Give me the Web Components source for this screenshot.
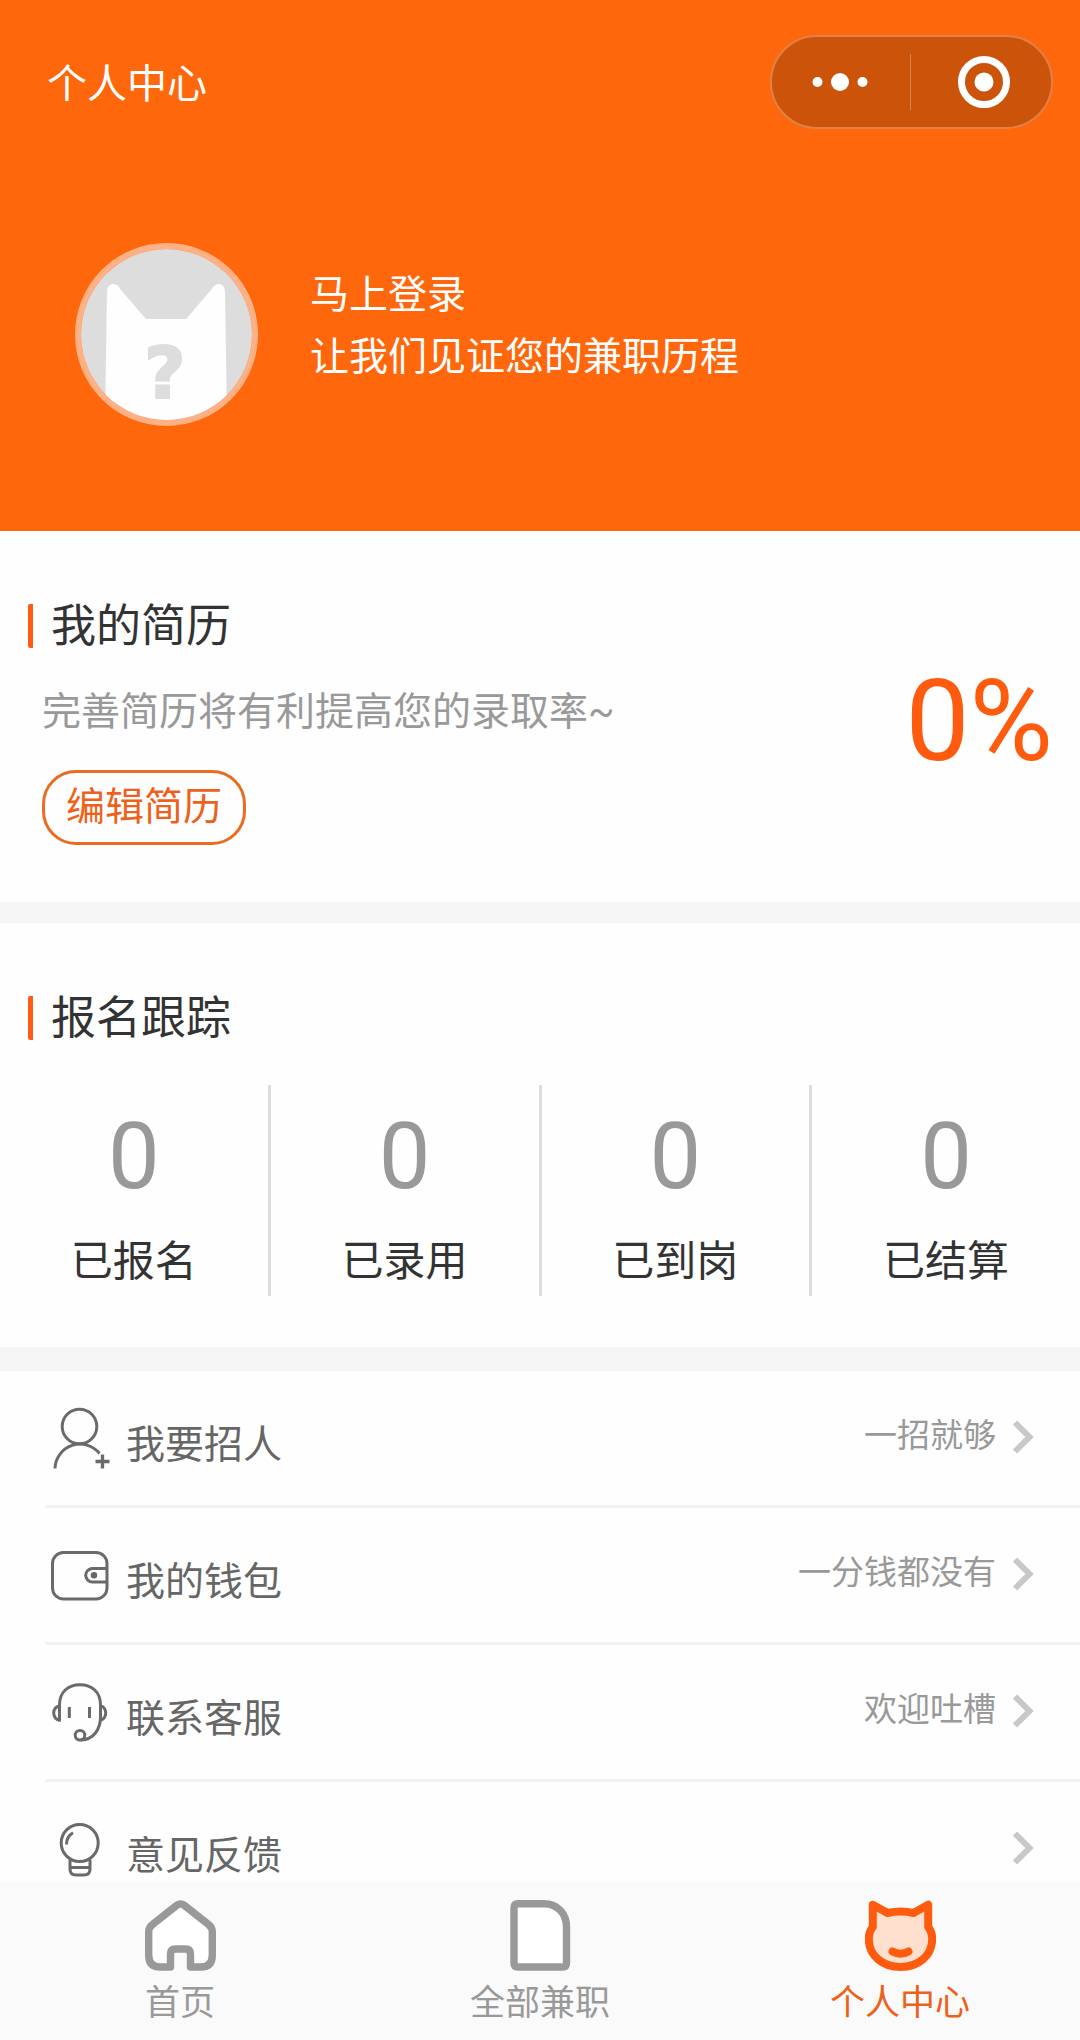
<!DOCTYPE html>
<html lang="zh-CN">
<head>
<meta charset="utf-8">
<meta name="viewport" content="width=device-width, initial-scale=1">
<title>个人中心</title>
<style>
  html, body { margin: 0; height: 100%; }
  body {
    font-family: Roboto, "Noto Sans CJK SC", sans-serif;
    color: #333;
    background: #fefefe;
    --brand: #ff670c;
    --brand-text: #ee611b;
    --band: #f5f5f5;
    --muted: #999;
  }
</style>
</head>
<body>
<app-shell>
  <profile-header heading="个人中心">
    <span slot="name">马上登录</span>
    <span slot="tagline">让我们见证您的兼职历程</span>
  </profile-header>
  <resume-card heading="我的简历" percent="0%">
    <span slot="tip">完善简历将有利提高您的录取率~</span>
    <span slot="action">编辑简历</span>
  </resume-card>
  <track-card heading="报名跟踪">
    <stat-cell value="0">已报名</stat-cell>
    <stat-cell value="0">已录用</stat-cell>
    <stat-cell value="0">已到岗</stat-cell>
    <stat-cell value="0">已结算</stat-cell>
  </track-card>
  <menu-list>
    <menu-row icon="recruit" hint="一招就够">我要招人</menu-row>
    <menu-row icon="wallet" hint="一分钱都没有">我的钱包</menu-row>
    <menu-row icon="service" hint="欢迎吐槽">联系客服</menu-row>
    <menu-row icon="feedback">意见反馈</menu-row>
  </menu-list>
  <tab-bar slot="tabs">
    <tab-item icon="home">首页</tab-item>
    <tab-item icon="jobs">全部兼职</tab-item>
    <tab-item icon="me" active>个人中心</tab-item>
  </tab-bar>
</app-shell>

<script>
const rowIcons = {
  recruit: '<circle cx="31.500" cy="20.500" r="17.300"/><path d="M7 62.500A25 25 0 0 1 51.500 47.500"/><path d="M54.500 48.500v14M47.500 55.500h14" stroke-width="3.300"/>',
  wallet: '<rect x="4.500" y="9.500" width="54.500" height="46.500" rx="11"/><path d="M58.500 25.500H44.500a6.800 6.800 0 0 0 0 13.600H58.500"/><circle cx="46" cy="32.300" r="3.200" fill="#666" stroke="none"/>',
  service: '<path d="M11.500 41.500V25C11.500 12 20 4.800 32 4.800S52.500 12 52.500 25V37C52.500 50 45 59.500 33 60"/><path d="M11.500 26a5.800 7 0 0 0 0 14M52.500 26a5.200 7 0 0 1 0 14M21.300 27v11M41.500 27v11"/><circle cx="32" cy="55.300" r="4.800"/>',
  feedback: '<circle cx="31.700" cy="26" r="18.500"/><path d="M18.500 27.500Q18.500 19.500 25 15.800M22 43V52q0 6 6 6h8q6 0 6-6V43M22 50.500h20"/>'
};
const tabIcons = {
  home: '<path fill="#fff" d="M31.500 5.500Q35.500 2.500 39.500 5.500L63.500 24.500Q67.300 27.500 67.300 32V55Q67.300 67 56 67H45.500V54Q45.500 49 40.500 49H30.500Q25.500 49 25.500 54V67H15Q3.700 67 3.700 55V32Q3.700 27.500 7.500 24.500Z"/>',
  jobs: '<path fill="#fff" d="M13 3.700H39C53 3.700 61.500 14 61.500 27V63Q61.500 67 57.500 67H13Q9 67 9 63V7.700Q9 3.700 13 3.700Z"/>',
  me: '<path fill="#ffdfcd" d="M7.800 4.800L22.500 13Q35.500 9.800 48.500 13L63.200 4.800V27Q67.200 32 67.200 39C67.200 56 53 67 35.500 67S3.800 56 3.800 39Q3.800 32 7.800 27Z"/><path d="M27.500 51.500q8 4.500 16 0"/>'
};

/* Base class: renders view() into an open shadow root. */
class View extends HTMLElement {
  connectedCallback() {
    if (this.shadowRoot) return;
    const t = document.createElement('template');
    t.innerHTML = this.view();
    this.attachShadow({ mode: 'open' }).append(t.content.cloneNode(true));
  }
  attr(name) { return this.getAttribute(name) || ''; }
}

class AppShell extends View {
  view() { return `
    <style>
      :host { display: flex; flex-direction: column; height: 100vh; }
      main { flex: 1; min-height: 0; overflow-y: auto; scrollbar-width: none; }
    </style>
    <main><slot></slot></main>
    <slot name="tabs"></slot>`; }
}

class ProfileHeader extends View {
  view() { return `
    <style>
      :host { display: block; background: var(--brand); color: #fff; padding: 35px 27px 105px 47px; }
      .top { display: flex; justify-content: space-between; align-items: center; }
      h1 { margin: 0; padding-top: 6px; font-size: 40px; line-height: 56px; font-weight: 400; }
      .profile { display: flex; align-items: center; gap: 52px; margin: 114px 0 0 28px; }
      .avatar { box-sizing: border-box; width: 183px; height: 183px; flex: none; border: 6px solid #ffb185; border-radius: 50%; overflow: hidden; }
      .avatar svg { display: block; }
      a { display: flex; flex-direction: column; padding-bottom: 18px; color: inherit; text-decoration: none; font-size: 39px; line-height: 62px; }
    </style>
    <div class="top"><h1>${this.attr('heading')}</h1><capsule-menu></capsule-menu></div>
    <div class="profile">
      <div class="avatar">
        <svg width="171" height="171" viewBox="0 0 171 171" role="img" aria-label="头像">
          <rect width="171" height="171" fill="#ddd"/>
          <path fill="#fefefe" d="M24 171L26 42Q27 35 32.500 35Q37 35 40 41L65 70H105L130 41Q133 35 138 35Q143 35 144 42L146 171Z"/>
          <text x="84" y="149" text-anchor="middle" font-family="DejaVu Sans" font-weight="700" font-size="72" fill="#ddd" stroke="#ddd" stroke-width="2">?</text>
        </svg>
      </div>
      <a href="#login"><slot name="name"></slot><slot name="tagline"></slot></a>
    </div>`; }
}

class CapsuleMenu extends View {
  view() { return `
    <style>
      :host { display: flex; align-items: center; box-sizing: border-box; width: 283px; height: 94px; border: 2px solid #e08149; border-radius: 47px; background: #cb530a; }
      button { flex: 1; height: 100%; display: flex; align-items: center; justify-content: center; padding: 0; border: 0; background: none; }
      button:first-of-type { padding-right: 3px; }
      button:last-of-type { padding-left: 5px; }
      i { width: 1px; height: 56px; background: #e08149; }
    </style>
    <button type="button" aria-label="更多"><svg width="56" height="18" viewBox="0 0 56 18" fill="#fff"><circle cx="5.500" cy="9" r="5"/><circle cx="28" cy="9" r="9"/><circle cx="50.500" cy="9" r="5"/></svg></button>
    <i></i>
    <button type="button" aria-label="关闭"><svg width="52" height="52" viewBox="0 0 52 52"><circle cx="26" cy="26" r="22.500" fill="none" stroke="#fff" stroke-width="7"/><circle cx="26" cy="26" r="9.500" fill="#fff"/></svg></button>`; }
}

class SectionTitle extends View {
  view() { return `
    <style>
      :host { display: block; }
      h2 { display: flex; align-items: center; gap: 18px; margin: 0 0 0 28px; font-size: 45px; line-height: 46px; height: 44px; font-weight: 400; }
      h2::before { content: ""; width: 5px; height: 44px; border-radius: 2px 0 0 2px; background: #ff5b14; }
      span { padding-top: 2px; }
    </style>
    <h2><span><slot></slot></span></h2>`; }
}

class ResumeCard extends View {
  view() { return `
    <style>
      :host { display: block; padding: 73px 0 57px; border-bottom: 21px solid var(--band); }
      .body { display: flex; justify-content: space-between; align-items: flex-start; padding: 34px 27px 0 42px; }
      p { margin: 0 0 28px; font-size: 39px; line-height: 60px; color: var(--muted); }
      button { box-sizing: border-box; height: 75px; padding: 0 21px 2px; border: 3px solid #ea6c20; border-radius: 34px; background: none; color: var(--brand-text); font: inherit; font-size: 39px; line-height: 60px; display: flex; align-items: center; }
      output { font-size: 114px; line-height: 78px; color: #ff5b0e; }
    </style>
    <section-title>${this.attr('heading')}</section-title>
    <div class="body">
      <div><p><slot name="tip"></slot></p><button type="button"><slot name="action"></slot></button></div>
      <output>${this.attr('percent')}</output>
    </div>`; }
}

class TrackCard extends View {
  view() { return `
    <style>
      :host { display: block; padding: 73px 0 51px; border-bottom: 24px solid var(--band); }
      .stats { display: flex; margin-top: 45px; }
      ::slotted(stat-cell) { border-right: 3px solid #ddd; }
      ::slotted(stat-cell:last-of-type) { border-right: 0; }
    </style>
    <section-title>${this.attr('heading')}</section-title>
    <div class="stats"><slot></slot></div>`; }
}

class StatCell extends View {
  view() { return `
    <style>
      :host { flex: 1 1 0; display: flex; flex-direction: column; align-items: center; gap: 30px; padding: 22px 0 9px; }
      .value { font-size: 92px; line-height: 100px; color: var(--muted); }
      .label { font-size: 42px; line-height: 50px; }
    </style>
    <span class="value">${this.attr('value')}</span>
    <span class="label"><slot></slot></span>`; }
}

class MenuList extends View {
  view() { return `
    <style>:host { display: block; padding-left: 45px; }</style>
    <nav><slot></slot></nav>`; }
}

class MenuRow extends View {
  view() { return `
    <style>
      :host { display: block; border-bottom: 3px solid #f2f2f2; }
      a { display: flex; align-items: center; height: 134px; padding: 0 46px 0 3px; color: #666; text-decoration: none; }
      svg { flex: none; fill: none; stroke: #6a6a6a; stroke-width: 3; }
      .label { flex: 1; padding: 14px 0 0 14px; font-size: 39px; line-height: 60px; }
      .hint { padding-bottom: 4px; font-size: 33px; line-height: 48px; color: var(--muted); }
      .go { margin: 0 0 2px 16px; stroke: #c8c8cb; stroke-width: 6; }
    </style>
    <a href="#${this.attr('icon')}">
      <svg width="64" height="64" viewBox="0 0 64 64" aria-hidden="true">${rowIcons[this.attr('icon')]}</svg>
      <span class="label"><slot></slot></span>
      <span class="hint">${this.attr('hint')}</span>
      <svg class="go" width="22" height="34" viewBox="0 0 22 34" aria-hidden="true"><path d="M3 2.500L17.500 17L3 31.500"/></svg>
    </a>`; }
}

class TabBar extends View {
  view() { return `
    <style>:host { display: block; flex: none; background: #fafafa; } nav { display: flex; }</style>
    <nav><slot></slot></nav>`; }
}

class TabItem extends View {
  view() { return `
    <style>
      :host { flex: 1 1 0; color: var(--muted); --line: #999; }
      :host([active]) { color: var(--brand-text); --line: #ff5b0e; }
      a { display: flex; flex-direction: column; align-items: center; gap: 13px; padding: 18px 0 16px; color: inherit; text-decoration: none; font-size: 35px; line-height: 40px; }
      svg { fill: none; stroke: var(--line); stroke-width: 7.400; stroke-linejoin: round; stroke-linecap: round; }
      :host([active]) svg { stroke-width: 8; }
    </style>
    <a href="#${this.attr('icon')}">
      <svg width="71" height="71" viewBox="0 0 71 71" aria-hidden="true">${tabIcons[this.attr('icon')]}</svg>
      <slot></slot>
    </a>`; }
}

customElements.define('app-shell', AppShell);
customElements.define('profile-header', ProfileHeader);
customElements.define('capsule-menu', CapsuleMenu);
customElements.define('section-title', SectionTitle);
customElements.define('resume-card', ResumeCard);
customElements.define('track-card', TrackCard);
customElements.define('stat-cell', StatCell);
customElements.define('menu-list', MenuList);
customElements.define('menu-row', MenuRow);
customElements.define('tab-bar', TabBar);
customElements.define('tab-item', TabItem);
</script>
</body>
</html>
